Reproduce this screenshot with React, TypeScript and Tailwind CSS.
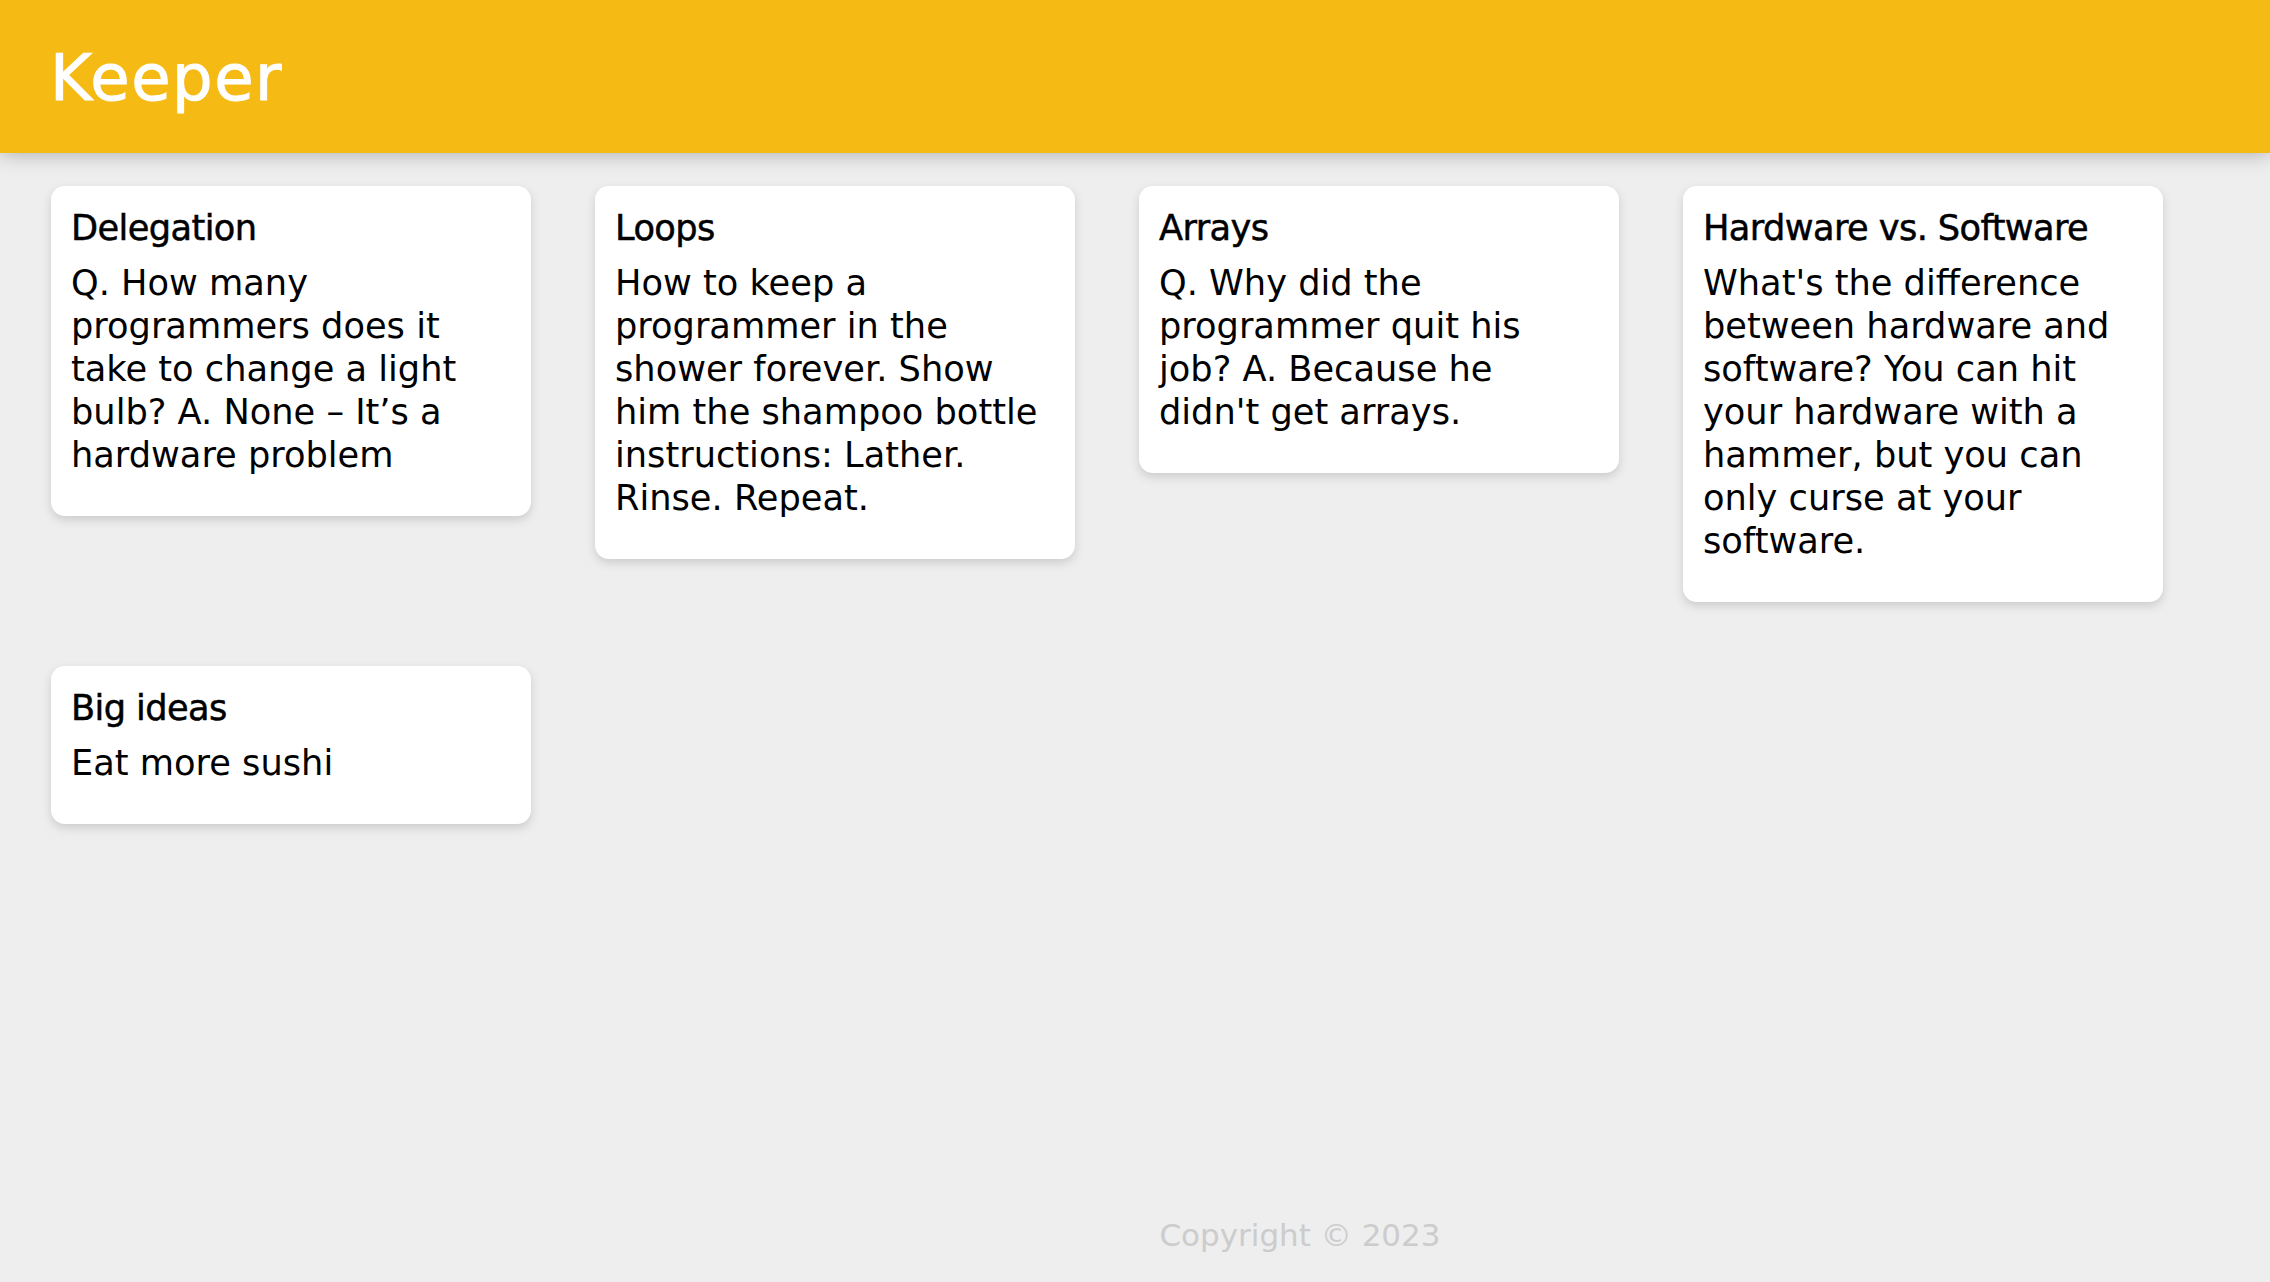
import React from "react";

type Note = { title: string; content: string };

const notes: Note[] = [
  {
    title: "Delegation",
    content:
      "Q. How many programmers does it take to change a light bulb? A. None – It’s a hardware problem",
  },
  {
    title: "Loops",
    content:
      "How to keep a programmer in the shower forever. Show him the shampoo bottle instructions: Lather. Rinse. Repeat.",
  },
  {
    title: "Arrays",
    content:
      "Q. Why did the programmer quit his job? A. Because he didn't get arrays.",
  },
  {
    title: "Hardware vs. Software",
    content:
      "What's the difference between hardware and software? You can hit your hardware with a hammer, but you can only curse at your software.",
  },
  {
    title: "Big ideas",
    content: "Eat more sushi",
  },
];

const Header = () => (
  <header className="h-[153px] shrink-0 bg-[#f5ba13] pl-[50px] pt-[46px] shadow-[0_0_20px_0_rgba(0,0,0,0.3)] relative z-10">
    <h1 className="text-[64px] leading-none font-normal tracking-[1.5px] text-white [-webkit-text-stroke:1px_white]">
      Keeper
    </h1>
  </header>
);

const NoteCard = ({ title, content }: Note) => (
  <div className="w-[480px] rounded-[14px] bg-white p-[20px] shadow-[0_4px_10px_#cccccc]">
    <h2 className="mb-[12px] text-[35.2px] leading-[43px] tracking-[-0.6px] text-black [-webkit-text-stroke:0.5px_black]">
      {title}
    </h2>
    <p className="mb-[20px] text-[35.2px] leading-[43px] text-black whitespace-pre-wrap break-words">
      {content}
    </p>
  </div>
);

const Footer = () => (
  <footer className="mt-auto w-full pl-[330px] pb-[27px] text-center">
    <p className="text-[31px] leading-[39px] text-[#cccccc]">Copyright © 2023</p>
  </footer>
);

export default function App() {
  return (
    <div className="flex min-h-screen flex-col bg-[#eeeeee] font-['DejaVu_Sans',sans-serif]">
      <Header />
      <main className="flex flex-wrap items-start gap-16 pl-[51px] pt-[33px]">
        {notes.map((note) => (
          <NoteCard key={note.title} {...note} />
        ))}
      </main>
      <Footer />
    </div>
  );
}
